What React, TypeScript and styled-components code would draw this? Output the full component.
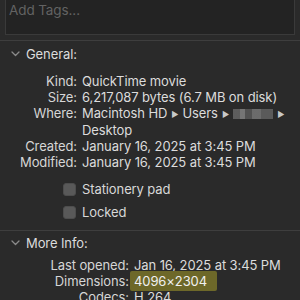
import styled, { createGlobalStyle } from "styled-components";

const GlobalStyle = createGlobalStyle`
  html, body {
    margin: 0;
    padding: 0;
    background: #2a2a2a;
  }
  body {
    font-family: Inter, "Liberation Sans", sans-serif;
    -webkit-font-smoothing: antialiased;
  }
`;

const Panel = styled.div`
  width: 300px;
  height: 300px;
  overflow: hidden;
  background: #2a2a2a;
  color: #dadada;
  font-size: 13px;
  letter-spacing: -0.1px;
`;

const TagField = styled.div`
  margin: -1px 5px 0;
  height: 36px;
  box-sizing: border-box;
  background: #232323;
  border: 1px solid #3a3a3a;
  padding: 2px 0 0 3px;
  color: #626262;
  font-size: 13.5px;
`;

const Divider = styled.div`
  height: 1px;
  background: #3e3e3e;
  margin-top: ${(p: { $top: number }) => p.$top}px;
`;

const SectionHeader = styled.div`
  display: flex;
  align-items: center;
  gap: 6px;
  padding-left: 11px;
  height: 16px;
  margin-top: ${(p: { $top: number }) => p.$top}px;
  color: #dcdcdc;
`;

const Chevron = () => (
  <svg width="9" height="6" viewBox="0 0 9 6">
    <path
      d="M1 1 L4.5 4.5 L8 1"
      fill="none"
      stroke="#8a8a8a"
      strokeWidth="1.3"
      strokeLinecap="round"
      strokeLinejoin="round"
    />
  </svg>
);

const InfoGrid = styled.div<{ $label: number; $top: number }>`
  display: grid;
  grid-template-columns: ${(p) => p.$label}px 1fr;
  column-gap: 5px;
  margin-top: ${(p) => p.$top}px;
  line-height: 16px;
`;

const Label = styled.div`
  text-align: right;
  white-space: nowrap;
  color: #d6d6d6;
`;

const Value = styled.div`
  white-space: nowrap;
  color: #dcdcdc;
`;

const PathArrow = styled.span`
  display: inline-block;
  font-size: 8px;
  color: #c8c8c8;
  margin: 0 4px;
  vertical-align: 1px;
`;

const Blurred = styled.span`
  display: inline-block;
  width: 40px;
  height: 10px;
  vertical-align: -1px;
  background: linear-gradient(
    90deg,
    #6a6a6a 0 18%,
    #888 18% 30%,
    #5c5c5c 30% 48%,
    #7c7c7c 48% 70%,
    #666 70% 100%
  );
  opacity: 0.8;
`;

const CheckRow = styled.label`
  display: flex;
  align-items: center;
  gap: 6px;
  padding-left: 63px;
  height: 16px;
  margin-top: ${(p: { $top: number }) => p.$top}px;
  color: #d8d8d8;
`;

const Box = styled.span`
  width: 13px;
  height: 13px;
  box-sizing: border-box;
  border-radius: 3px;
  background: #595959;
  border: 1px solid #4d4d4d;
`;

const Highlight = styled.span`
  background: #6d6829;
  color: #f0f0f0;
  padding: 2px 10px 2px 4px;
  margin-left: -4px;
  border-radius: 2px;
`;

export default function App() {
  return (
    <>
      <GlobalStyle />
      <Panel>
        <TagField>Add Tags...</TagField>
        <Divider $top={5} />
        <SectionHeader $top={5}>
          <Chevron />
          General:
        </SectionHeader>
        <InfoGrid $label={77} $top={11}>
          <Label>Kind:</Label>
          <Value>QuickTime movie</Value>
          <Label>Size:</Label>
          <Value>6,217,087 bytes (6.7 MB on disk)</Value>
          <Label>Where:</Label>
          <Value>
            Macintosh HD<PathArrow>▶</PathArrow>Users<PathArrow>▶</PathArrow>
            <Blurred />
            <PathArrow>▶</PathArrow>
          </Value>
          <Label />
          <Value>Desktop</Value>
          <Label>Created:</Label>
          <Value>January 16, 2025 at 3:45 PM</Value>
          <Label>Modified:</Label>
          <Value>January 16, 2025 at 3:45 PM</Value>
        </InfoGrid>
        <CheckRow $top={11}>
          <Box />
          Stationery pad
        </CheckRow>
        <CheckRow $top={7}>
          <Box />
          Locked
        </CheckRow>
        <Divider $top={10} />
        <SectionHeader $top={4}>
          <Chevron />
          More Info:
        </SectionHeader>
        <InfoGrid $label={129} $top={6}>
          <Label>Last opened:</Label>
          <Value>Jan 16, 2025 at 3:45 PM</Value>
          <Label>Dimensions:</Label>
          <Value>
            <Highlight>4096×2304</Highlight>
          </Value>
          <Label>Codecs:</Label>
          <Value>H.264</Value>
        </InfoGrid>
      </Panel>
    </>
  );
}
